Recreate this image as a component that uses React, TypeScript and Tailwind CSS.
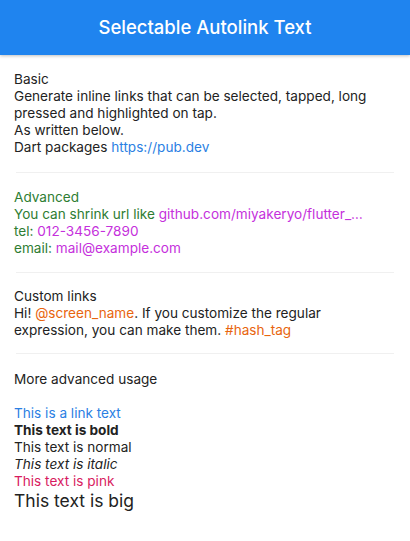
export default function App() {
  return (
    <div className="w-[410px] h-[541px] bg-white overflow-hidden text-[13.6px] leading-[17px] text-[#222]" style={{ fontFamily: "Inter, 'Noto Sans', sans-serif" }}>
      <header className="h-[55px] bg-[#1f84ef] flex items-center justify-center shadow-[0_1px_3px_rgba(0,0,0,0.25)] relative z-10">
        <h1 className="text-white text-[18.5px] font-medium">Selectable Autolink Text</h1>
      </header>

      <div className="px-[14px]">
        <section className="py-4">
          <p>Basic</p>
          <p>Generate inline links that can be selected, tapped, long pressed and highlighted on tap.</p>
          <p>As written below.</p>
          <p>
            Dart packages <span className="text-[#2b7fe3]">https://pub.dev</span>
          </p>
        </section>
        <div className="h-px bg-[#f0f0f0] mx-[2px]" />

        <section className="pt-4 pb-[15px] text-[#2e7d32]">
          <p>Advanced</p>
          <p className="whitespace-nowrap">
            You can shrink url like <span className="text-[#c530dc]">github.com/miyakeryo/flutter_…</span>
          </p>
          <p>
            tel: <span className="text-[#c530dc]">012-3456-7890</span>
          </p>
          <p>
            email: <span className="text-[#c530dc]">mail@example.com</span>
          </p>
        </section>
        <div className="h-px bg-[#f0f0f0] mx-[2px]" />

        <section className="pt-[15px] pb-[14px]">
          <p>Custom links</p>
          <p>
            Hi! <span className="text-[#e8650e]">@screen_name</span>. If you customize the regular
            <br />
            expression, you can make them. <span className="text-[#e8650e]">#hash_tag</span>
          </p>
        </section>
        <div className="h-px bg-[#f0f0f0] mx-[2px]" />

        <section className="pt-[17px] pb-4">
          <p>More advanced usage</p>
          <p className="h-[17px]" />
          <p className="text-[#2b7fe3]">This is a link text</p>
          <p className="font-bold">This text is bold</p>
          <p>This text is normal</p>
          <p className="italic">This text is italic</p>
          <p className="text-[#d81b60]">This text is pink</p>
          <p className="text-[17.5px] leading-[21px]">This text is big</p>
        </section>
      </div>
    </div>
  );
}
